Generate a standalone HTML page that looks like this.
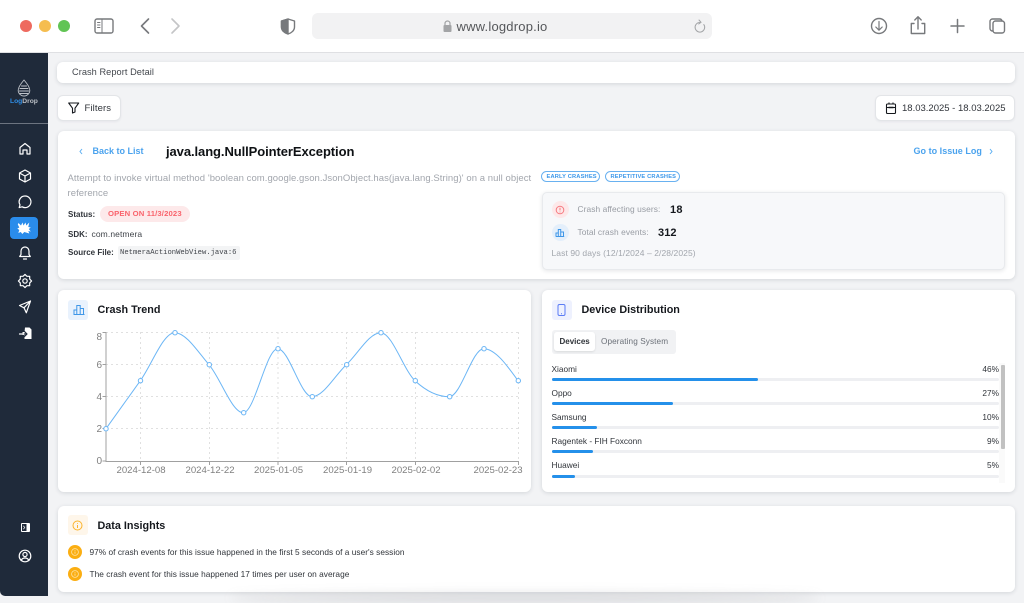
<!DOCTYPE html>
<html><head><meta charset="utf-8"><title>LogDrop</title>
<style>
*{box-sizing:border-box}
html,body{margin:0;padding:0;width:1024px;height:596px;overflow:hidden;background:#f2f3f5;font-family:"Liberation Sans",sans-serif;color:#15181d}
.a{position:absolute}
.t{position:absolute;white-space:nowrap;line-height:1}
.card{position:absolute;background:#fff;border-radius:6px;box-shadow:0 1px 4px rgba(30,40,60,.14)}
svg{position:absolute;overflow:visible}
</style></head><body>
<div class="a" style="left:0;top:0;width:1024px;height:53px;background:#fff;border-bottom:1px solid #dfe0e3"></div>
<div class="a" style="left:20px;top:20px;width:12px;height:12px;border-radius:50%;background:#ee6a5f"></div>
<div class="a" style="left:39px;top:20px;width:12px;height:12px;border-radius:50%;background:#f5bd4f"></div>
<div class="a" style="left:58px;top:20px;width:12px;height:12px;border-radius:50%;background:#61c454"></div>
<svg style="left:0;top:0" width="1024" height="53" fill="none" stroke="#77797c" stroke-width="1.4" stroke-linecap="round" stroke-linejoin="round">
<rect x="95" y="19" width="18" height="14" rx="2"/><path d="M102 19v14M97.500 22.500h2.500M97.500 25h2.500M97.500 27.500h2.500" stroke-width="1"/>
<path d="M148.500 19l-7 7 7 7" stroke-width="1.600"/><path d="M172 19l7 7-7 7" stroke="#c4c5c7" stroke-width="1.600"/>
<path d="M288 19l6.500 2v6c0 3.500-3 6-6.500 7-3.500-1-6.500-3.500-6.500-7v-6z"/><path d="M288 19l-6.500 2v6c0 3.500 3 6 6.500 7z" fill="#77797c"/>
<circle cx="879" cy="26" r="7.500"/><path d="M879 21.500v8.500M875.800 27l3.200 3.200 3.200-3.200" stroke-width="1.200"/>
<path d="M914 23.500h-2.700v10h13.400v-10H922M918 29V17M914.800 20l3.200-3.200 3.200 3.200"/>
<path d="M957.500 19.500v13M951 26h13" stroke-width="1.500"/>
<rect x="993" y="21" width="11.500" height="12" rx="2.500"/><path d="M993 31h-.500a2.500 2.500 0 0 1-2.500-2.500v-7a2.500 2.500 0 0 1 2.500-2.500h7a2.500 2.500 0 0 1 2.500 2"/>
</svg>
<div class="a" style="left:312px;top:13px;width:400px;height:26px;background:#f2f2f3;border-radius:6px"></div>
<svg style="left:443px;top:20px" width="10" height="12"><rect x=".5" y="5" width="8" height="7" rx="1" fill="#a3a4a6"/><path d="M2 5V3.500a2.500 2.500 0 0 1 5 0V5" fill="none" stroke="#a3a4a6" stroke-width="1.200"/></svg>
<div class="t" style="left:456.500px;top:19.500px;font-size:13px;color:#55575a;letter-spacing:.2px">www.logdrop.io</div>
<svg style="left:0;top:0" width="1024" height="53" fill="none" stroke="#a2a4a6" stroke-width="1" stroke-linecap="round"><path d="M699.500 22.500a4.800 4.800 0 1 0 4.300 2"/><path d="M699 20l2 2.300-2.300 1.700"/></svg>

<div class="a" style="left:0;top:53px;width:48px;height:543px;background:#1f2a3a;border-bottom-left-radius:5px"></div>
<div class="a" style="left:0;top:123px;width:48px;height:1px;background:#6c7480"></div>
<svg style="left:0;top:53px" width="48" height="543" fill="none" stroke="#fff" stroke-width="1.200" stroke-linecap="round" stroke-linejoin="round">
<path d="M24 27c3 3.500 5.800 7 5.800 10.200a5.800 5.800 0 0 1-11.600 0C18.200 34 21 30.500 24 27z" stroke="#bfc3c9" stroke-width=".9"/>
<path d="M21.500 33h5M20 35.500h8M19.500 38h9M20 40.500h8" stroke="#bfc3c9" stroke-width="1"/>
<path d="M20 96.500l5-4 5 4v6.500h-3v-4h-4v4h-3z" transform="translate(0 -2)"/>
<path transform="translate(0 -2)" d="M25 119l5.500 3v6L25 131l-5.500-3v-6zM19.500 122l5.500 3 5.500-3M25 125v6"/>
<path d="M25 143a5.800 5.800 0 1 1-2.800 10.800l-3 .8.800-2.800A5.800 5.800 0 0 1 25 143z"/>
<path d="M25 194a4 4 0 0 1 4 4v3.500l1.300 2h-10.600l1.300-2V198a4 4 0 0 1 4-4zM23.500 206h3"/>
<circle cx="25" cy="228" r="2.200"/><path d="M31.600 228L29.700 226.050 29.670 223.330 26.950 223.290 25 221.400 23.050 223.290 20.330 223.330 20.290 226.050 18.400 228 20.290 229.950 20.330 232.670 23.050 232.710 25 234.600 26.950 232.710 29.670 232.670 29.700 229.950z"/>
<path d="M30.500 248l-11 4.500 4.500 2.300 2.300 5zM24 254.800l6.500-6.800"/>
<g transform="translate(0 2)"><path d="M25 272.500h4.500l2 2v9.500H24.500v-4h-2v-3h2z" fill="#fff" stroke="none"/><path d="M19.500 279h7M24.500 276.500L27 279l-2.500 2.500" stroke="#1f2a3a" stroke-width="1.200"/><path d="M19.500 279h4"/></g>
<g transform="translate(0 1)"><rect x="21" y="469" width="9" height="9" rx="1" fill="#fff" stroke="none"/><rect x="22" y="470" width="4.500" height="7" fill="#1f2a3a" stroke="none"/><path d="M23.500 472l1.300 1.500-1.300 1.500" stroke="#fff" stroke-width=".7"/></g>
<circle cx="25" cy="503" r="5.800"/><circle cx="25" cy="501.500" r="2.100"/><path d="M21 507.500c1-2 2.500-2.500 4-2.500s3 .5 4 2.500"/>
</svg>
<div class="t" style="left:10px;top:98.500px;font-size:6.700px;font-weight:700;color:#bcc0c6"><span style="color:#2f8fe8">Log</span>Drop</div>
<div class="a" style="left:10px;top:217px;width:28px;height:22px;background:#2a8ceb;border-radius:4px"></div>
<svg style="left:10px;top:217px" width="28" height="22" fill="#fff"><path d="M8.500 6l2.500 2.500L12.500 5.500l1 3 2-3 .8 3 3-3-1 4.500 2.500.5-2 1.500 2 2.500-2.500-.5 1 2.500-5-1.500-2 2-1.500-2-2.500 1 1-3-2-1.500 2-1-1.500-3z"/></svg>

<div class="card" style="left:57px;top:62px;width:958px;height:21px;"></div>
<div class="t" style="left:72px;top:67.500px;font-size:9.200px;color:#43474d;letter-spacing:.07px">Crash Report Detail</div>
<div class="card" style="left:57px;top:95px;width:64px;height:26px;border:1px solid #e3e5e8;box-shadow:0 1px 2px rgba(30,40,60,.06)"></div>
<svg style="left:68px;top:102px" width="12" height="12" fill="none" stroke="#15181d" stroke-width="1.100" stroke-linejoin="round"><path d="M.7 1h10L7 6.200V10L4.500 11V6.200z"/></svg>
<div class="t" style="left:84.500px;top:104px;font-size:9.500px;color:#30343a;letter-spacing:.1px">Filters</div>
<div class="card" style="left:875px;top:95px;width:140px;height:26px;border:1px solid #e3e5e8;box-shadow:0 1px 2px rgba(30,40,60,.06)"></div>
<svg style="left:885px;top:102px" width="12" height="13" fill="none" stroke="#15181d" stroke-width="1.100"><rect x="1.500" y="2" width="9" height="9.500" rx="1"/><path d="M1.500 5.500h9M4 .5v2M8 .5v2"/><path d="M3.500 5.500h5" stroke-width="1.500"/></svg>
<div class="t" style="left:902px;top:104px;font-size:9.500px;color:#30343a">18.03.2025 - 18.03.2025</div>

<div class="card" style="left:58px;top:131px;width:957px;height:148px"></div>
<svg style="left:78px;top:147px" width="8" height="9" fill="none" stroke="#5eb0f2" stroke-width="1"><path d="M4 2L2 4.500 4 7"/></svg>
<div class="t" style="left:92.500px;top:146.500px;font-size:9px;font-weight:700;color:#4ba3ee">Back to List</div>
<div class="t" style="left:166px;top:144.500px;font-size:13px;font-weight:700;color:#0e1114;letter-spacing:-.08px">java.lang.NullPointerException</div>
<div class="t" style="left:913.500px;top:146.500px;font-size:9px;font-weight:700;color:#4ba3ee;letter-spacing:.03px">Go to Issue Log</div>
<svg style="left:988px;top:147px" width="8" height="9" fill="none" stroke="#5eb0f2" stroke-width="1"><path d="M2 2L4 4.500 2 7"/></svg>
<div class="a" style="left:67.500px;top:172px;width:470px;font-size:9.500px;line-height:14.500px;color:#a2a6ad;letter-spacing:.06px">Attempt to invoke virtual method 'boolean com.google.gson.JsonObject.has(java.lang.String)' on a null object reference</div>
<div class="t" style="left:68px;top:210.500px;font-size:8px;font-weight:700;color:#30343a">Status:</div>
<div class="a" style="left:100px;top:206px;width:90px;height:15.500px;border-radius:8px;background:#fde9ea"></div>
<div class="t" style="left:108px;top:210px;font-size:7.700px;font-weight:700;color:#f9636c;letter-spacing:.14px">OPEN ON 11/3/2023</div>
<div class="t" style="left:68px;top:230.500px;font-size:8px;font-weight:700;color:#30343a">SDK:</div>
<div class="t" style="left:91.500px;top:229.500px;font-size:8.500px;color:#40444a;letter-spacing:.1px">com.netmera</div>
<div class="t" style="left:68px;top:248.500px;font-size:8px;font-weight:700;color:#30343a">Source File:</div>
<div class="a" style="left:118px;top:246px;width:122px;height:13.500px;border-radius:2px;background:#f3f4f5"></div>
<div class="t" style="left:120px;top:250px;font-family:'Liberation Mono',monospace;font-size:7.200px;color:#40444a">NetmeraActionWebView.java:6</div>

<div class="a" style="left:541px;top:170.500px;width:58.500px;height:11.500px;border:1px solid #69b1f0;border-radius:6px"></div>
<div class="t" style="left:546.500px;top:175px;font-size:5.700px;font-weight:700;color:#3c98ea;letter-spacing:.17px">EARLY CRASHES</div>
<div class="a" style="left:605px;top:170.500px;width:75px;height:11.500px;border:1px solid #69b1f0;border-radius:6px"></div>
<div class="t" style="left:610.500px;top:175px;font-size:5.700px;font-weight:700;color:#3c98ea;letter-spacing:.17px">REPETITIVE CRASHES</div>
<div class="a" style="left:541.500px;top:191.500px;width:463.500px;height:78.500px;background:#f7f8fa;border:1px solid #e8eaed;border-radius:5px;box-shadow:0 1px 4px rgba(30,40,60,.12)"></div>
<div class="a" style="left:551.500px;top:201px;width:17px;height:17px;border-radius:50%;background:#fde8e9"></div>
<svg style="left:555px;top:204.500px" width="10" height="10" fill="none" stroke="#f67a80" stroke-width="1"><circle cx="5" cy="5" r="3.800"/><path d="M5 2.800v2.600M5 6.600v.8"/></svg>
<div class="a" style="left:551.500px;top:224px;width:17px;height:17px;border-radius:50%;background:#e4effb"></div>
<svg style="left:555px;top:228px" width="10" height="10" fill="none" stroke="#3f97e8" stroke-width="1"><path d="M.8 8.500h8.400M1 8.500V5h2.300v3.500M3.300 8.500V1.500h2.400v7M5.700 8.500V4H8.500v4.500"/></svg>
<div class="t" style="left:577.500px;top:205px;font-size:8.400px;color:#989ca3;letter-spacing:.07px">Crash affecting users:</div>
<div class="t" style="left:670px;top:205px;font-size:11px;font-weight:700;color:#15181d;letter-spacing:.2px">18</div>
<div class="t" style="left:577.500px;top:228px;font-size:8.400px;color:#989ca3;letter-spacing:.07px">Total crash events:</div>
<div class="t" style="left:658px;top:228px;font-size:11px;font-weight:700;color:#15181d;letter-spacing:.1px">312</div>
<div class="t" style="left:551.500px;top:249px;font-size:8.500px;color:#a2a6ad;letter-spacing:.08px">Last 90 days (12/1/2024 – 2/28/2025)</div>

<div class="card" style="left:58px;top:290px;width:473px;height:202px"></div>
<div class="a" style="left:68px;top:299.500px;width:20px;height:20px;border-radius:3px;background:#e9f2fd"></div>
<svg style="left:72.500px;top:304px" width="12" height="12" fill="none" stroke="#3f97e8" stroke-width="1"><path d="M.5 10.500h11M1 10.500V6h2.800v4.500M3.800 10.500V1.500h3.400v9M7.200 10.500V4.500H10.500v6"/></svg>
<div class="t" style="left:97.500px;top:305px;font-size:10.800px;font-weight:700;color:#15181d">Crash Trend</div>
<svg style="left:0;top:0" width="1024" height="596" fill="none">
<g stroke="#e0e0e0" stroke-width="1" stroke-dasharray="2 3"><path d="M106 332.500H518.500M106 364.500H518.500M106 396.500H518.500M106 428.500H518.500M140.500 332V461M209.500 332V461M278 332V461M346.500 332V461M415.500 332V461M518.500 332V461"/></g>
<path d="M106 332v129.500H518.500M102.500 332.500H106M102.500 364.500H106M102.500 396.500H106M102.500 428.500H106M102.500 461H106M140.500 461v4M209.500 461v4M278 461v4M346.500 461v4M415.500 461v4M518.500 461v4" stroke="#a0a0a0" stroke-width="1"/>
<path transform="translate(0 .4)" stroke="#6cb6f5" stroke-width="1" d="M106 428.300C117.440 412.300 128.890 396.300 140.330 380.300C151.780 364.300 163.220 332.300 174.670 332.300C186.110 332.300 197.560 351 209 364.300C220.440 377.600 231.890 412.300 243.330 412.300C254.780 412.300 266.220 348.300 277.670 348.300C289.110 348.300 300.560 396.300 312 396.300C323.440 396.300 334.890 375 346.330 364.300C357.780 353.600 369.220 332.300 380.670 332.300C392.110 332.300 403.560 369.600 415 380.300C426.440 391 437.890 396.300 449.330 396.300C460.780 396.300 472.220 348.300 483.670 348.300C495.110 348.300 506.560 364.300 518 380.300"/>
<g fill="#fff" stroke="#6cb6f5" stroke-width="1"><circle cx="106" cy="428.700" r="2.200"/><circle cx="140.500" cy="380.700" r="2.200"/><circle cx="175" cy="332.700" r="2.200"/><circle cx="209.300" cy="364.700" r="2.200"/><circle cx="243.700" cy="412.700" r="2.200"/><circle cx="278" cy="348.700" r="2.200"/><circle cx="312.300" cy="396.700" r="2.200"/><circle cx="346.700" cy="364.700" r="2.200"/><circle cx="381" cy="332.700" r="2.200"/><circle cx="415.300" cy="380.700" r="2.200"/><circle cx="449.700" cy="396.700" r="2.200"/><circle cx="484" cy="348.700" r="2.200"/><circle cx="518.300" cy="380.700" r="2.200"/></g>
</svg>
<div class="t" style="left:96.500px;top:333px;font-size:10px;color:#808080">8</div>
<div class="t" style="left:96.500px;top:361px;font-size:10px;color:#808080">6</div>
<div class="t" style="left:96.500px;top:393px;font-size:10px;color:#808080">4</div>
<div class="t" style="left:96.500px;top:425px;font-size:10px;color:#808080">2</div>
<div class="t" style="left:96.500px;top:457px;font-size:10px;color:#808080">0</div>
<div class="t" style="left:116.500px;top:466px;font-size:9.600px;color:#808080">2024-12-08</div>
<div class="t" style="left:185.500px;top:466px;font-size:9.600px;color:#808080">2024-12-22</div>
<div class="t" style="left:254px;top:466px;font-size:9.600px;color:#808080">2025-01-05</div>
<div class="t" style="left:323px;top:466px;font-size:9.600px;color:#808080">2025-01-19</div>
<div class="t" style="left:391.500px;top:466px;font-size:9.600px;color:#808080">2025-02-02</div>
<div class="t" style="left:473.500px;top:466px;font-size:9.600px;color:#808080">2025-02-23</div>

<div class="card" style="left:542px;top:290px;width:473px;height:202px"></div>
<div class="a" style="left:551.500px;top:299.500px;width:20px;height:20px;border-radius:3px;background:#eef1fe"></div>
<svg style="left:557px;top:304px" width="10" height="12" fill="none" stroke="#5b7cf5" stroke-width="1"><rect x="1" y=".5" width="7" height="11" rx="1.500"/><path d="M4 9.800h1"/></svg>
<div class="t" style="left:581.500px;top:305px;font-size:10.800px;font-weight:700;color:#15181d">Device Distribution</div>
<div class="a" style="left:551.500px;top:329.500px;width:124.500px;height:24px;background:#f1f2f4;border-radius:3px"></div>
<div class="a" style="left:554px;top:332px;width:41px;height:19px;background:#fff;border-radius:3px;box-shadow:0 1px 2px rgba(0,0,0,.1)"></div>
<div class="t" style="left:559.500px;top:337.500px;font-size:8px;font-weight:700;color:#30343a">Devices</div>
<div class="t" style="left:601px;top:337.500px;font-size:8.200px;color:#6b7078;letter-spacing:.1px">Operating System</div>

<div class="t" style="left:551.500px;top:364.500px;font-size:8.300px;color:#30343a">Xiaomi</div>
<div class="t" style="right:25px;top:364.500px;font-size:8.300px;color:#30343a">46%</div>
<div class="a" style="left:551.500px;top:378px;width:447.500px;height:3px;border-radius:2px;background:#eeeff2"></div><div class="a" style="left:551.500px;top:378px;width:206px;height:3px;border-radius:2px;background:#2490ea"></div>
<div class="t" style="left:551.500px;top:388.500px;font-size:8.300px;color:#30343a">Oppo</div>
<div class="t" style="right:25px;top:388.500px;font-size:8.300px;color:#30343a">27%</div>
<div class="a" style="left:551.500px;top:402px;width:447.500px;height:3px;border-radius:2px;background:#eeeff2"></div><div class="a" style="left:551.500px;top:402px;width:121px;height:3px;border-radius:2px;background:#2490ea"></div>
<div class="t" style="left:551.500px;top:412.500px;font-size:8.300px;color:#30343a">Samsung</div>
<div class="t" style="right:25px;top:412.500px;font-size:8.300px;color:#30343a">10%</div>
<div class="a" style="left:551.500px;top:426px;width:447.500px;height:3px;border-radius:2px;background:#eeeff2"></div><div class="a" style="left:551.500px;top:426px;width:45px;height:3px;border-radius:2px;background:#2490ea"></div>
<div class="t" style="left:551.500px;top:436.500px;font-size:8.300px;color:#30343a">Ragentek - FIH Foxconn</div>
<div class="t" style="right:25px;top:436.500px;font-size:8.300px;color:#30343a">9%</div>
<div class="a" style="left:551.500px;top:450px;width:447.500px;height:3px;border-radius:2px;background:#eeeff2"></div><div class="a" style="left:551.500px;top:450px;width:41px;height:3px;border-radius:2px;background:#2490ea"></div>
<div class="t" style="left:551.500px;top:460.500px;font-size:8.300px;color:#30343a">Huawei</div>
<div class="t" style="right:25px;top:460.500px;font-size:8.300px;color:#30343a">5%</div>
<div class="a" style="left:551.500px;top:475px;width:447.500px;height:3px;border-radius:2px;background:#eeeff2"></div><div class="a" style="left:551.500px;top:475px;width:23px;height:3px;border-radius:2px;background:#2490ea"></div>
<div class="a" style="left:999px;top:363px;width:6px;height:120px;background:#fafafa"></div>
<div class="a" style="left:1000.500px;top:365px;width:4px;height:84px;background:#c1c1c1;border-radius:1px"></div>

<div class="card" style="left:58px;top:506px;width:957px;height:86px"></div>
<div class="a" style="left:67.500px;top:515px;width:20px;height:20px;border-radius:3px;background:#fef6ea"></div>
<svg style="left:72px;top:519.500px" width="11" height="11" fill="none" stroke="#fbb32a" stroke-width="1"><circle cx="5.500" cy="5.500" r="4.500"/><path d="M5.500 5v3M5.500 3v.8"/></svg>
<div class="t" style="left:97.500px;top:521px;font-size:10.800px;font-weight:700;color:#15181d">Data Insights</div>
<div class="a" style="left:67.500px;top:545px;width:14px;height:14px;border-radius:50%;background:#fbae12"></div>
<svg style="left:70.500px;top:548px" width="8" height="8" fill="none" stroke="#fde3a8" stroke-width=".8"><circle cx="4" cy="4" r="3.400"/><path d="M4 3.500v2.300M4 2v.7"/></svg>
<div class="t" style="left:89.500px;top:548px;font-size:8.300px;color:#30343a;letter-spacing:.03px">97% of crash events for this issue happened in the first 5 seconds of a user's session</div>
<div class="a" style="left:67.500px;top:566.500px;width:14px;height:14px;border-radius:50%;background:#fbae12"></div>
<svg style="left:70.500px;top:569.500px" width="8" height="8" fill="none" stroke="#fde3a8" stroke-width=".8"><circle cx="4" cy="4" r="3.400"/><path d="M4 3.500v2.300M4 2v.7"/></svg>
<div class="t" style="left:89.500px;top:569.500px;font-size:8.300px;color:#30343a;letter-spacing:.03px">The crash event for this issue happened 17 times per user on average</div>
<div class="a" style="left:230px;top:593px;width:590px;height:10px;background:rgba(120,120,125,.2);filter:blur(5px);border-radius:50%"></div>
</body></html>
